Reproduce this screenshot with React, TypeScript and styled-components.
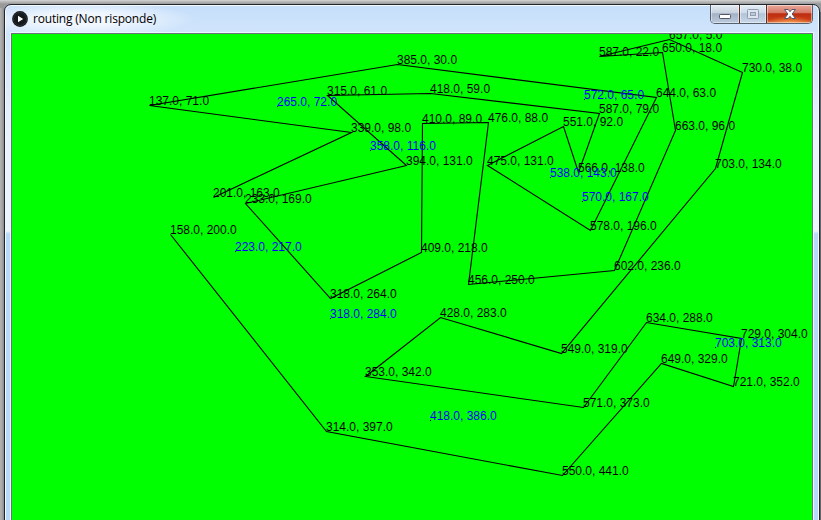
import React from "react";
import styled, { createGlobalStyle, css } from "styled-components";

const GlobalStyle = createGlobalStyle`
  body { margin: 0; overflow: hidden; }
`;

const Desktop = styled.div`
  box-sizing: border-box;
  width: 821px;
  height: 520px;
  padding: 4px 1px 0 4px;
  overflow: hidden;
  background:
    linear-gradient(90deg, #b4b4b4 0, #a6a6a6 2px, #8a8a8a 4px, transparent 4px) 0 8px no-repeat,
    linear-gradient(90deg, transparent 820px, #62666c 820px) 0 12px no-repeat,
    linear-gradient(180deg, #d4d4d4 0, #b4b4b4 2px, #999 4px, #8f8f8f 100%);
`;

const Window = styled.div`
  box-sizing: border-box;
  width: 816px;
  height: 560px;
  border: 1px solid #20262e;
  border-radius: 7px 7px 0 0;
  box-shadow: inset 0 0 0 1px #f4faff;
  background: linear-gradient(
    180deg, #c5defa 0, #d0e5fc 26px, #d7e9fc 60px, #e9f3fd 130px, #edf5fd 226px, #b9d9f9 229px, #b9d9f9 100%
  );
`;

const TitleBar = styled.header`
  display: flex;
  align-items: flex-start;
  height: 28px;
  padding-left: 7px;
  border-radius: 6px 6px 0 0;
  background:
    radial-gradient(ellipse 115px 18px at 76px 14px, rgba(255, 255, 255, 0.72) 35%, rgba(255, 255, 255, 0) 100%);
`;

const AppIcon = styled.svg`
  width: 16px;
  height: 16px;
  margin-top: 6px;
`;

const Title = styled.h1`
  flex: 1;
  margin: 5px 0 0 5px;
  font: 400 12px/18px "Open Sans", "Noto Sans", sans-serif;
  letter-spacing: -0.19px;
  color: #000;
  white-space: nowrap;
`;

const Controls = styled.div`
  box-sizing: border-box;
  display: flex;
  width: 103px;
  height: 19px;
  margin-right: 6px;
  border: 1px solid #56616f;
  border-top: 0;
  border-radius: 0 0 5px 5px;
  overflow: hidden;
`;

type Kind = "minimize" | "maximize" | "close";

const faces = {
  minimize: css`
    width: 28px;
    background: linear-gradient(#e4ebf3 0, #c6d1de 45%, #a2b1c4 48%, #bac9dc 100%);
  `,
  maximize: css`
    width: 27px;
    background: linear-gradient(#e4edf6 0, #cbd9e8 45%, #b2c3d7 48%, #c8d8e9 100%);
  `,
  close: css`
    width: 46px;
    background:
      radial-gradient(ellipse 24px 7px at 50% 100%, rgba(255, 166, 81, 0.8), rgba(255, 130, 40, 0)),
      linear-gradient(#e9a99c 0, #d57663 45%, #bd2d12 48%, #c83a17 80%, #d77445 100%);
  `,
};

const ControlButton = styled.button<{ $kind: Kind }>`
  box-sizing: border-box;
  flex: none;
  display: block;
  height: 18px;
  padding: 0;
  border: 0;
  box-shadow: inset 0 0 0 1px rgba(255, 255, 255, 0.45);
  ${({ $kind }) => faces[$kind]}
  & + & {
    margin-left: 0;
    border-left: 1px solid ${({ $kind }) => ($kind === "close" ? "#5c2b26" : "#7c8999")};
  }
  svg { display: block; margin: 0 auto; }
`;

const Client = styled.main`
  box-sizing: border-box;
  width: 802px;
  height: 530px;
  margin-left: 6px;
  border: 1px solid #67727c;
  box-shadow: 0 0 0 1px #edf7ff;
`;

const Sketch = styled.svg`
  display: block;
  width: 800px;
  height: 528px;
  background: #00ff00;
`;

const Route = styled.polyline`
  fill: none;
  stroke: #000;
  stroke-width: 1.1;
`;

const Label = styled.text<{ $open?: boolean }>`
  font: 12px "Liberation Sans", Arial, sans-serif;
  fill: ${({ $open }) => ($open ? "#0000ff" : "#000")};
`;

type Point = [number, number];

const route: Point[] = [
  [158, 200], [314, 397], [550, 441], [649, 329], [721, 352], [729, 304],
  [634, 288], [571, 373], [353, 342], [428, 283], [549, 319], [703, 134],
  [730, 38], [657, 5], [587, 22], [650, 18], [663, 96], [602, 236],
  [456, 250], [476, 88], [410, 89], [409, 218], [318, 264], [233, 169],
  [394, 131], [315, 61], [418, 59], [587, 79], [566, 138], [551, 92],
  [475, 131], [578, 196], [644, 63], [385, 30], [137, 71], [339, 98],
  [201, 163],
];

const unvisited: Point[] = [
  [265, 72], [358, 116], [572, 65], [538, 143], [570, 167],
  [223, 217], [318, 284], [703, 313], [418, 386],
];

const caption = ([x, y]: Point) => `${x.toFixed(1)}, ${y.toFixed(1)}`;

export default function App() {
  return (
    <>
      <GlobalStyle />
      <Desktop>
        <Window>
          <TitleBar>
            <AppIcon viewBox="0 0 16 16">
              <circle cx="8" cy="8" r="7.9" fill="#15191c" />
              <circle cx="8" cy="8" r="6.5" fill="none" stroke="#343b3f" strokeWidth="0.7" />
              <path d="M6 4.8 11.2 8 6 11.2Z" fill="#fff" />
            </AppIcon>
            <Title>routing (Non risponde)</Title>
            <Controls>
              <ControlButton $kind="minimize" aria-label="Minimize">
                <svg width="28" height="18">
                  <rect x="8.5" y="9.5" width="11" height="4" rx="0.8" fill="#fff" stroke="#535666" />
                </svg>
              </ControlButton>
              <ControlButton $kind="maximize" aria-label="Maximize">
                <svg width="26" height="18">
                  <rect x="7.5" y="4.5" width="11" height="9" rx="0.8" fill="#dce5ef" stroke="#929eae" />
                  <rect x="10.5" y="7.5" width="5" height="3" fill="#bdcbdc" stroke="#929eae" />
                </svg>
              </ControlButton>
              <ControlButton $kind="close" aria-label="Close">
                <svg width="45" height="18">
                  <path
                    d="M17.5 4.5h3.7l1.8 2.2 1.8-2.2h3.7l-3.4 4.5 3.4 4.5h-3.7L23 11.3l-1.8 2.2h-3.7l3.4-4.5Z"
                    fill="#fff"
                    stroke="#53566a"
                    strokeLinejoin="round"
                  />
                </svg>
              </ControlButton>
            </Controls>
          </TitleBar>
          <Client>
            <Sketch viewBox="0 0 800 528">
              <g transform="translate(0.5 0.5)">
                <Route points={route.map((p) => p.join(",")).join(" ")} />
              </g>
              {route.map((p) => (
                <Label key={caption(p)} x={p[0]} y={p[1]}>{caption(p)}</Label>
              ))}
              {unvisited.map((p) => (
                <React.Fragment key={caption(p)}>
                  <rect x={p[0]} y={p[1]} width="1" height="1" />
                  <Label $open x={p[0]} y={p[1]}>{caption(p)}</Label>
                </React.Fragment>
              ))}
            </Sketch>
          </Client>
        </Window>
      </Desktop>
    </>
  );
}
